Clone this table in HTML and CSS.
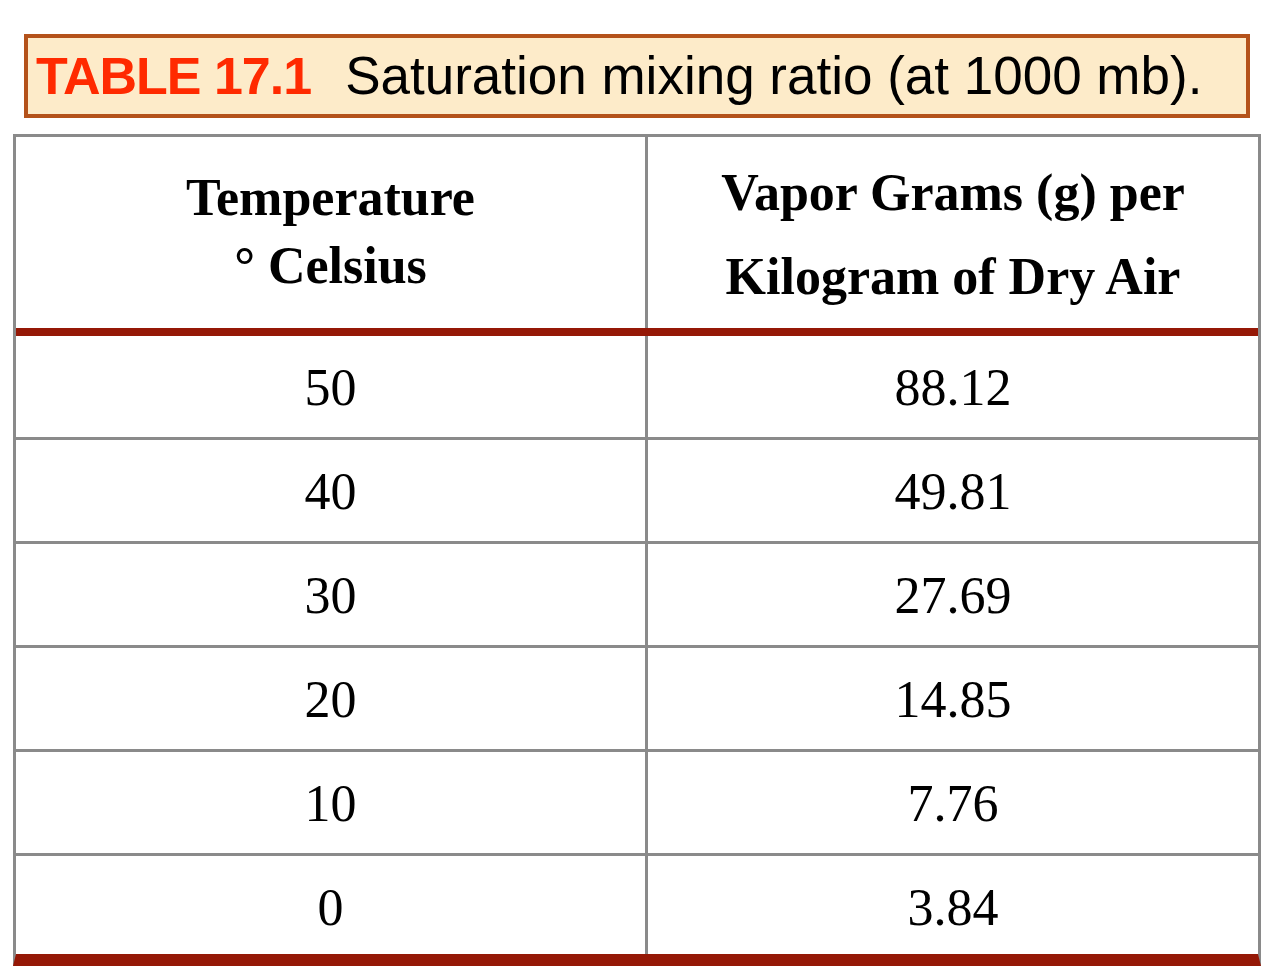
FILE: index.html
```html
<!DOCTYPE html>
<html lang="en">
<head>
<meta charset="utf-8">
<title>Table 17.1 Saturation mixing ratio</title>
<link rel="stylesheet" href="styles.css">
</head>
<body>
<div class="page">
  <div class="caption">
    <span class="caption-num">TABLE 17.1</span>
    <span class="caption-text">Saturation mixing ratio (at 1000 mb).</span>
  </div>
  <div class="table">
    <div class="row head">
      <div class="cell c1 h1"><div>Temperature</div><div>° Celsius</div></div>
      <div class="cell c2 h2"><div>Vapor Grams (g) per</div><div>Kilogram of Dry Air</div></div>
    </div>
    <div class="row data">
      <div class="cell c1">50</div>
      <div class="cell c2">88.12</div>
    </div>
    <div class="row data">
      <div class="cell c1">40</div>
      <div class="cell c2">49.81</div>
    </div>
    <div class="row data">
      <div class="cell c1">30</div>
      <div class="cell c2">27.69</div>
    </div>
    <div class="row data">
      <div class="cell c1">20</div>
      <div class="cell c2">14.85</div>
    </div>
    <div class="row data">
      <div class="cell c1">10</div>
      <div class="cell c2">7.76</div>
    </div>
    <div class="row data last">
      <div class="cell c1">0</div>
      <div class="cell c2">3.84</div>
    </div>
  </div>
</div>
</body>
</html>
```

FILE: styles.css
```css
* { box-sizing: border-box; }

html, body {
  margin: 0;
  padding: 0;
  background: #ffffff;
}

.page {
  width: 1282px;
  padding-top: 34px;
}

.caption {
  margin-left: 24px;
  width: 1226px;
  height: 84px;
  border: 4px solid #b4521a;
  background: #fdebc9;
  display: flex;
  align-items: baseline;
  padding-left: 8px;
  font-family: "Liberation Sans", Arial, sans-serif;
  line-height: 76px;
  white-space: nowrap;
}

.caption-num {
  color: #ff2a00;
  font-weight: bold;
  font-size: 52px;
  letter-spacing: -1px;
  margin-right: 34px;
}

.caption-text {
  color: #000000;
  font-size: 53px;
}

.table {
  margin-top: 16px;
  margin-left: 13px;
  width: 1248px;
  border: 3px solid #8a8a8a;
  border-bottom: 12px solid #951806;
  font-family: "Liberation Serif", "Times New Roman", serif;
  font-size: 52px;
  color: #000000;
}

.row {
  display: flex;
}

.cell {
  text-align: center;
}

.c1 {
  width: 632px;
  border-right: 3px solid #8a8a8a;
}

.c2 {
  flex: 1;
}

.head {
  height: 199px;
  border-bottom: 8px solid #951806;
  font-weight: bold;
}

.h1 {
  padding-top: 27px;
  line-height: 68px;
}

.h2 {
  padding-top: 14px;
  line-height: 84px;
}

.data {
  height: 104px;
  border-bottom: 3px solid #8a8a8a;
}

.data .cell {
  padding-top: 3px;
  line-height: 98px;
}

.data.last {
  height: 98px;
  border-bottom: none;
}
```
